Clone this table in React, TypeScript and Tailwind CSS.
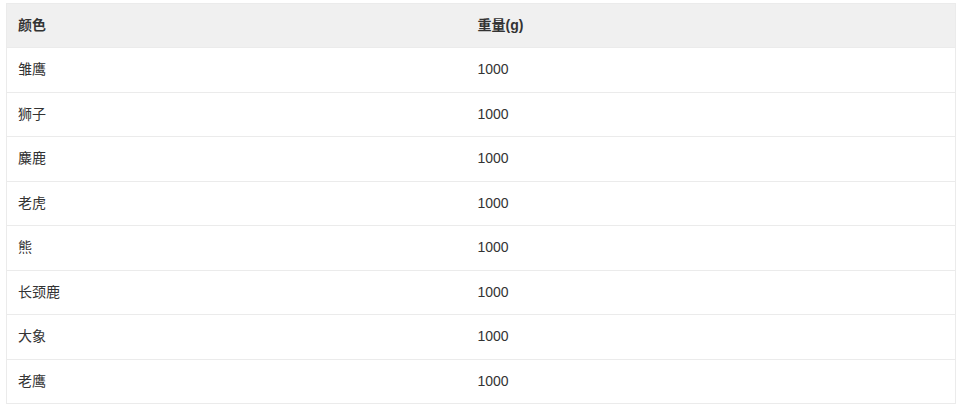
const rows = [
  { name: "雏鹰", weight: 1000 },
  { name: "狮子", weight: 1000 },
  { name: "麋鹿", weight: 1000 },
  { name: "老虎", weight: 1000 },
  { name: "熊", weight: 1000 },
  { name: "长颈鹿", weight: 1000 },
  { name: "大象", weight: 1000 },
  { name: "老鹰", weight: 1000 },
];

export default function App() {
  return (
    <div
      className="bg-white w-[960px] h-[411px] pt-[3px] pl-[6px] text-[14px] text-[#333333]"
      style={{ fontFamily: '"Liberation Sans", Arial, "Noto Sans CJK SC", sans-serif' }}
    >
      <table className="w-[950px] border border-[#ebebeb] border-collapse table-fixed">
        <thead>
          <tr className="bg-[#f0f0f0] h-[44px]">
            <th className="w-[460px] text-left font-bold pl-[11px] py-0">颜色</th>
            <th className="text-left font-bold pl-[11px] py-0">重量(g)</th>
          </tr>
        </thead>
        <tbody>
          {rows.map((r, i) => (
            <tr key={i} className="h-[44.5px] border-t border-[#ebebeb]">
              <td className="pl-[11px] py-0">{r.name}</td>
              <td className="pl-[11px] py-0">{r.weight}</td>
            </tr>
          ))}
        </tbody>
      </table>
    </div>
  );
}
